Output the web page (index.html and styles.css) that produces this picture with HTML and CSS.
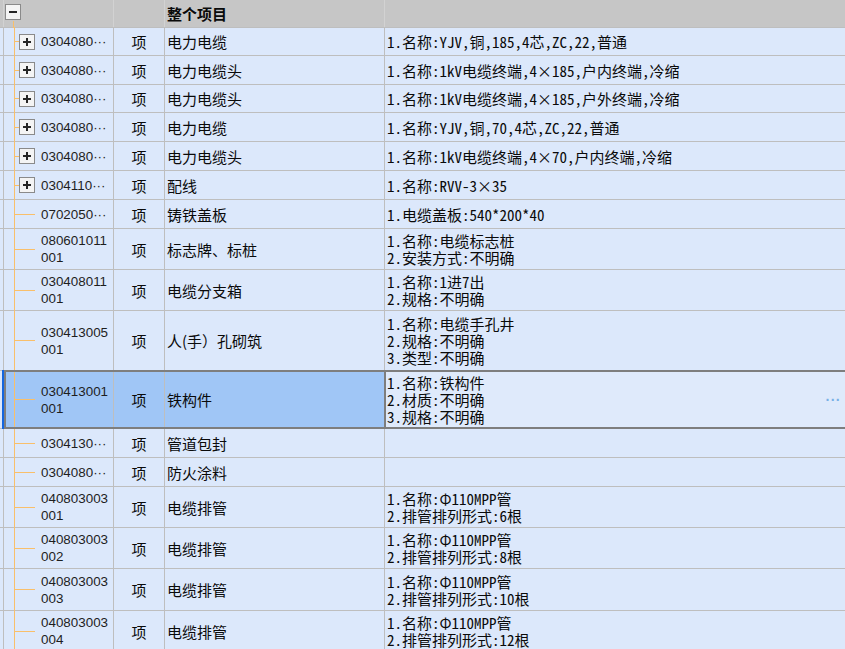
FILE: index.html
```html
<!DOCTYPE html>
<html lang="zh-CN">
<head>
<meta charset="utf-8">
<title>整个项目</title>
<link rel="stylesheet" href="styles.css">
</head>
<body>
<div class="grid">
  <div class="row head h27">
    <div class="c0"></div>
    <div class="tree root"><span class="box minus"></span></div>
    <div class="unit"></div>
    <div class="name"><b>整个项目</b></div>
    <div class="desc"></div>
  </div>

  <div class="row h27">
    <div class="c0"></div>
    <div class="tree"><span class="stub short"></span><span class="box plus"></span><span class="code">0304080···</span></div>
    <div class="unit">项</div>
    <div class="name">电力电缆</div>
    <div class="desc"><p>1.名称:YJV,铜,185,4芯,ZC,22,普通</p></div>
  </div>
  <div class="row h28">
    <div class="c0"></div>
    <div class="tree"><span class="stub short"></span><span class="box plus"></span><span class="code">0304080···</span></div>
    <div class="unit">项</div>
    <div class="name">电力电缆头</div>
    <div class="desc"><p>1.名称:1kV电缆终端,4×185,户内终端,冷缩</p></div>
  </div>
  <div class="row h27">
    <div class="c0"></div>
    <div class="tree"><span class="stub short"></span><span class="box plus"></span><span class="code">0304080···</span></div>
    <div class="unit">项</div>
    <div class="name">电力电缆头</div>
    <div class="desc"><p>1.名称:1kV电缆终端,4×185,户外终端,冷缩</p></div>
  </div>
  <div class="row h28">
    <div class="c0"></div>
    <div class="tree"><span class="stub short"></span><span class="box plus"></span><span class="code">0304080···</span></div>
    <div class="unit">项</div>
    <div class="name">电力电缆</div>
    <div class="desc"><p>1.名称:YJV,铜,70,4芯,ZC,22,普通</p></div>
  </div>
  <div class="row h28">
    <div class="c0"></div>
    <div class="tree"><span class="stub short"></span><span class="box plus"></span><span class="code">0304080···</span></div>
    <div class="unit">项</div>
    <div class="name">电力电缆头</div>
    <div class="desc"><p>1.名称:1kV电缆终端,4×70,户内终端,冷缩</p></div>
  </div>
  <div class="row h28">
    <div class="c0"></div>
    <div class="tree"><span class="stub short"></span><span class="box plus"></span><span class="code">0304110···</span></div>
    <div class="unit">项</div>
    <div class="name">配线</div>
    <div class="desc"><p>1.名称:RVV-3×35</p></div>
  </div>
  <div class="row h28">
    <div class="c0"></div>
    <div class="tree"><span class="stub long"></span><span class="code">0702050···</span></div>
    <div class="unit">项</div>
    <div class="name">铸铁盖板</div>
    <div class="desc"><p>1.电缆盖板:540*200*40</p></div>
  </div>
  <div class="row h40">
    <div class="c0"></div>
    <div class="tree"><span class="stub long"></span><span class="code">080601011001</span></div>
    <div class="unit">项</div>
    <div class="name">标志牌、标桩</div>
    <div class="desc"><p>1.名称:电缆标志桩<br>2.安装方式:不明确</p></div>
  </div>
  <div class="row h40">
    <div class="c0"></div>
    <div class="tree"><span class="stub long"></span><span class="code">030408011001</span></div>
    <div class="unit">项</div>
    <div class="name">电缆分支箱</div>
    <div class="desc"><p>1.名称:1进7出<br>2.规格:不明确</p></div>
  </div>
  <div class="row h59">
    <div class="c0"></div>
    <div class="tree"><span class="stub long"></span><span class="code">030413005001</span></div>
    <div class="unit">项</div>
    <div class="name">人(手）孔砌筑</div>
    <div class="desc"><p>1.名称:电缆手孔井<br>2.规格:不明确<br>3.类型:不明确</p></div>
  </div>
  <div class="row h57 selected">
    <div class="c0"></div>
    <div class="tree"><span class="stub long"></span><span class="code">030413001001</span></div>
    <div class="unit">项</div>
    <div class="name">铁构件</div>
    <div class="desc focus"><p>1.名称:铁构件<br>2.材质:不明确<br>3.规格:不明确</p><span class="more">···</span></div>
  </div>
  <div class="row h28">
    <div class="c0"></div>
    <div class="tree"><span class="stub long"></span><span class="code">0304130···</span></div>
    <div class="unit">项</div>
    <div class="name">管道包封</div>
    <div class="desc"></div>
  </div>
  <div class="row h28">
    <div class="c0"></div>
    <div class="tree"><span class="stub long"></span><span class="code">0304080···</span></div>
    <div class="unit">项</div>
    <div class="name">防火涂料</div>
    <div class="desc"></div>
  </div>
  <div class="row h40">
    <div class="c0"></div>
    <div class="tree"><span class="stub long"></span><span class="code">040803003001</span></div>
    <div class="unit">项</div>
    <div class="name">电缆排管</div>
    <div class="desc"><p>1.名称:Φ110MPP管<br>2.排管排列形式:6根</p></div>
  </div>
  <div class="row h40">
    <div class="c0"></div>
    <div class="tree"><span class="stub long"></span><span class="code">040803003002</span></div>
    <div class="unit">项</div>
    <div class="name">电缆排管</div>
    <div class="desc"><p>1.名称:Φ110MPP管<br>2.排管排列形式:8根</p></div>
  </div>
  <div class="row h41">
    <div class="c0"></div>
    <div class="tree"><span class="stub long"></span><span class="code">040803003003</span></div>
    <div class="unit">项</div>
    <div class="name">电缆排管</div>
    <div class="desc"><p>1.名称:Φ110MPP管<br>2.排管排列形式:10根</p></div>
  </div>
  <div class="row h40">
    <div class="c0"></div>
    <div class="tree"><span class="stub long"></span><span class="code">040803003004</span></div>
    <div class="unit">项</div>
    <div class="name">电缆排管</div>
    <div class="desc"><p>1.名称:Φ110MPP管<br>2.排管排列形式:12根</p></div>
  </div>
</div>
</body>
</html>
```

FILE: styles.css
```css
html, body {
  margin: 0;
  padding: 0;
  background: #dce8fb;
}
body {
  width: 845px;
  height: 649px;
  overflow: hidden;
  font-family: "Noto Sans CJK SC", sans-serif;
  font-size: 15px;
  color: #0a0a0a;
}
.grid {
  display: flex;
  flex-direction: column;
  gap: 1px;
  background: #bebebe;
}
.row {
  display: grid;
  grid-template-columns: 3px 109px 50px 219px 1fr;
  column-gap: 1px;
  background: #bebebe;
  position: relative;
}
.row > div {
  background: #dce8fb;
  display: flex;
  align-items: center;
  min-width: 0;
}
.h27 { height: 27px; }
.h28 { height: 28px; }
.h40 { height: 40px; }
.h41 { height: 41px; }
.h57 { height: 57px; }
.h59 { height: 59px; }

.head { background: #d2d2d2; }
.head > div { background: #c6c6c6; }
.head .name b { font-weight: 700; }

.tree {
  position: relative;
  padding-left: 10px;
}
.tree::before {
  content: "";
  position: absolute;
  left: 10px;
  top: -1px;
  bottom: -1px;
  width: 1px;
  background: #f9bf6a;
  z-index: 1;
}
.tree.root {
  padding-left: 1px;
  align-items: flex-start;
  padding-top: 4px;
}
.tree.root::before {
  left: 9px;
  top: 21px;
  bottom: -1px;
}
.stub {
  height: 1px;
  background: #f9bf6a;
  flex: none;
}
.stub.short { width: 5px; }
.stub.long { width: 21px; margin-right: 6px; }
.box {
  flex: none;
  width: 14px;
  height: 14px;
  border: 1px solid #8a8a8a;
  background: #f4f4f4;
  position: relative;
  box-sizing: content-box;
}
.box.plus { margin-right: 6px; }
.box::before,
.box::after {
  content: "";
  position: absolute;
  background: #262626;
}
.box::before {
  left: 3px;
  right: 3px;
  top: 6px;
  height: 2px;
}
.box.plus::after {
  top: 3px;
  bottom: 3px;
  left: 6px;
  width: 2px;
}
.code {
  font-family: "Liberation Sans", "DejaVu Sans", sans-serif;
  font-size: 13.4px;
  line-height: 17px;
  color: #1e1e1e;
  word-break: break-all;
  width: 72px;
  white-space: normal;
}
.unit {
  justify-content: center;
}
.name {
  padding-left: 2px;
  white-space: nowrap;
  overflow: hidden;
}
.desc {
  padding-left: 2px;
  white-space: nowrap;
  overflow: hidden;
  font-family: "Noto Sans Mono CJK SC", "Noto Sans CJK SC", monospace;
}
.desc p {
  margin: 0;
  line-height: 17px;
}
.selected > div { background: #a0c6f6; }
.selected > .c0 { background: #dce8fb; }
.selected > .desc {
  background: #dfeafb;
  justify-content: space-between;
  box-shadow: -1px 0 0 #7e7e7e, inset 1px 0 0 #7e7e7e;
}
.selected::before {
  content: "";
  position: absolute;
  left: 2px;
  width: 2px;
  top: -1px;
  bottom: -1px;
  background: #1466e0;
}
.selected::after {
  content: "";
  position: absolute;
  left: 4px;
  right: -4px;
  top: -1px;
  bottom: -1px;
  border: 2px solid #7e7e7e;
  pointer-events: none;
  z-index: 2;
}
.more {
  color: #78b0e6;
  font-family: "Liberation Sans", sans-serif;
  font-size: 14px;
  font-weight: 700;
  margin-right: 4px;
  letter-spacing: 0.5px;
}
```
